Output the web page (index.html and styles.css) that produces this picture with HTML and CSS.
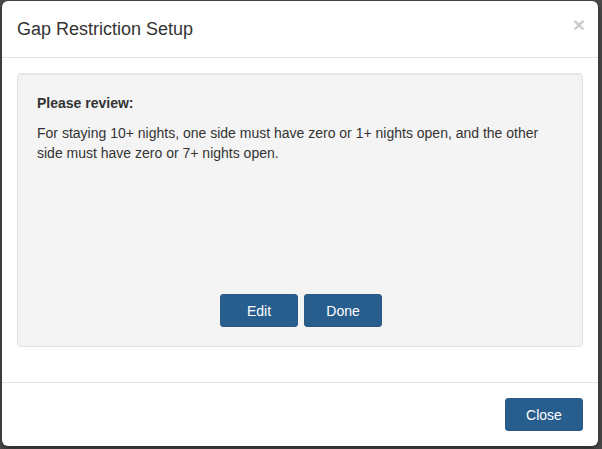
FILE: index.html
```html
<!DOCTYPE html>
<html>
<head>
  <title>Gap Restriction Setup</title>
  <link rel="stylesheet" href="styles.css">
</head>
<body>
  <div class="modal">
    <div class="modal-header">
      <button class="close" type="button">&times;</button>
      <h4 class="modal-title">Gap Restriction Setup</h4>
    </div>
    <div class="modal-body">
      <div class="well">
        <p class="review-title">Please review:</p>
        <p>For staying 10+ nights, one side must have zero or 1+ nights open, and the other side must have zero or 7+ nights open.</p>
        <div class="well-actions">
          <button class="btn" type="button">Edit</button>
          <button class="btn" type="button">Done</button>
        </div>
      </div>
    </div>
    <div class="modal-footer">
      <button class="btn" type="button">Close</button>
    </div>
  </div>
</body>
</html>
```

FILE: styles.css
```css
body {
  font-family: "Liberation Sans", Arial, sans-serif;
  font-size: 14px;
  line-height: 20px;
  color: #333;
  margin: 0;
  padding: 1px 4px 3px 2px;
  background-color: #4b4b4b;
}
.modal {
  width: 596px;
  height: 445px;
  background-color: #fff;
  border-radius: 6px;
  box-shadow: 0 3px 9px rgba(0, 0, 0, 0.5);
  display: flex;
  flex-direction: column;
}
.modal-header {
  padding: 15px;
  border-bottom: 1px solid #e5e5e5;
}
.modal-title {
  margin: 0;
  font-size: 18px;
  font-weight: normal;
  line-height: 26px;
}
.close {
  float: right;
  margin-top: -2px;
  margin-right: -2px;
  padding: 0;
  border: 0;
  background: transparent;
  font-family: "Liberation Sans", Arial, sans-serif;
  font-size: 21px;
  font-weight: bold;
  line-height: 1;
  color: #000;
  opacity: 0.2;
  cursor: pointer;
}
.modal-body {
  padding: 15px;
  flex: 1;
}
.well {
  box-sizing: border-box;
  height: 274px;
  padding: 19px;
  background-color: #f4f4f4;
  border: 1px solid #e3e3e3;
  border-radius: 4px;
  box-shadow: inset 0 1px 1px rgba(0, 0, 0, 0.05);
  display: flex;
  flex-direction: column;
}
.well p {
  margin: 0 0 10px;
}
.review-title {
  font-weight: bold;
}
.well-actions {
  margin-top: auto;
  padding-left: 2px;
  display: flex;
  justify-content: center;
  gap: 6px;
}
.btn {
  width: 78px;
  height: 33px;
  padding: 0;
  font-family: "Liberation Sans", Arial, sans-serif;
  font-size: 14px;
  color: #fff;
  background-color: #285e8e;
  border: 1px solid #2b5a84;
  border-radius: 3px;
  cursor: pointer;
}
.modal-footer {
  padding: 15px;
  text-align: right;
  border-top: 1px solid #e5e5e5;
}
```
